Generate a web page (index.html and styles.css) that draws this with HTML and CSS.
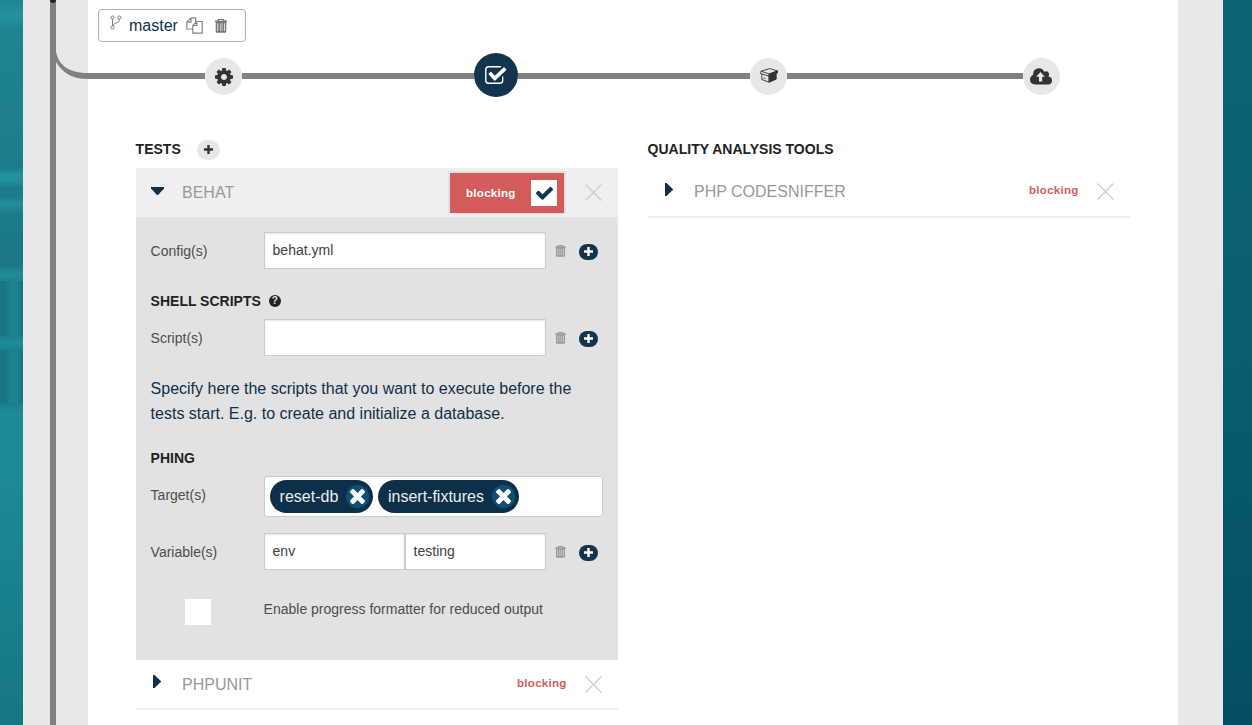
FILE: index.html
```html
<!DOCTYPE html>
<html lang="en">
<head>
<meta charset="utf-8">
<title>Build configuration</title>
<link rel="stylesheet" href="styles.css">
</head>
<body>
<svg class="defs" aria-hidden="true">
  <symbol id="trash" viewBox="0 0 12 14"><path fill="currentColor" fill-rule="evenodd" d="M3.500 0h5q.7 0 .8.8l.2.8H12v1.500h-.7v9.200q0 1.500-1.500 1.500H2.200Q.7 13.800.7 12.300V3.100H0V1.600h2.500l.2-.8Q2.800 0 3.500 0zM4.200 1.100L4 1.700h4l-.2-.6zM2.400 4.200v7.300q0 .5.400.5t.4-.5V4.200zM5 4.200V12h.6V4.200zM6.800 4.200V12h.6V4.200zM9 4.200V11.500q0 .5.400.5t.4-.5V4.200z"/></symbol>
  <symbol id="plus" viewBox="0 0 9 9"><path fill="currentColor" d="M3.300 0h2.400v3.300H9v2.400H5.700V9H3.300V5.700H0V3.300h3.300z"/></symbol>
  <symbol id="check" viewBox="122 270 1550 1252"><path fill="currentColor" d="M1671 566q0 40-28 68l-724 724-136 136q-28 28-68 28t-68-28l-136-136-362-362q-28-28-28-68t28-68l136-136q28-28 68-28t68 28l294 295 656-657q28-28 68-28t68 28l136 136q28 28 28 68z"/></symbol>
  <symbol id="times" viewBox="302 366 1188 1188"><path fill="currentColor" d="M1490 1322q0 40-28 68l-136 136q-28 28-68 28t-68-28l-294-294-294 294q-28 28-68 28t-68-28l-136-136q-28-28-28-68t28-68l294-294-294-294q-28-28-28-68t28-68l136-136q28-28 68-28t68 28l294 294 294-294q28-28 68-28t68 28l136 136q28 28 28 68t-28 68l-294 294 294 294q28 28 28 68z"/></symbol>
  <symbol id="close" viewBox="0 0 17 17"><path stroke="currentColor" stroke-width="1.100" fill="none" d="M.5.5l16 16M16.500.5l-16 16"/></symbol>
</svg>
<div class="shell">
  <div class="backdrop-left"></div>
  <div class="rail"><i class="rail-line"></i><i class="rail-dot"></i>
    <svg class="rail-curve" width="40" height="34" viewBox="0 0 40 34"><path d="M25 2v2C27.500 15 35 25 57 25h5v6h-5C41 31 32 25 25 14z" transform="translate(-22 0)" fill="#808080"/></svg>
  </div>
  <main class="sheet">
    <div class="branch">
      <svg class="fork" width="12" height="16" viewBox="0 0 12 16" fill="none" stroke="#808080"><circle cx="2.500" cy="2.500" r="1.600"/><circle cx="2.500" cy="12.500" r="1.600"/><circle cx="9.300" cy="2.500" r="1.600"/><path d="M2.500 4v7M9.300 4c.2 4-2.300 3.500-4.300 4.300q-1.500.7-2 2.700"/></svg>
      <span class="branch-name">master</span>
      <svg class="copy" width="17" height="17" viewBox="0 0 17 17" fill="none" stroke="#858585" stroke-width="1.200"><path d="M6.500 12H.8V5.200L5 .8h4.700v4M5 .8v4.400H.8M6.800 8.500l4-4h5.400v11.700H6.800zM10.800 4.500v4h-4"/></svg>
      <svg class="branch-trash" width="12" height="14"><use href="#trash"/></svg>
    </div>
    <div class="pipeline">
      <i class="link lead"></i>
      <span class="step gear-step"><svg width="18" height="18" viewBox="128 128 1536 1536"><path fill="currentColor" d="M1152 896q0-106-75-181t-181-75-181 75-75 181 75 181 181 75 181-75 75-181zm512-109v222q0 12-8 23t-20 13l-185 28q-19 54-39 91 35 50 107 138 10 12 10 25t-9 23q-27 37-99 108t-94 71q-12 0-26-9l-138-108q-44 23-91 38-16 136-29 186-7 28-36 28h-222q-14 0-24.500-8.500t-11.500-21.500l-28-184q-49-16-90-37l-141 107q-10 9-25 9-14 0-25-11-126-114-165-168-7-10-7-23 0-12 8-23 15-21 51-66.500t54-70.500q-27-50-41-99l-183-27q-13-2-21-12.500t-8-23.500v-222q0-12 8-23t19-13l186-28q14-46 39-92-40-57-107-138-10-12-10-24 0-10 9-23 26-36 98.500-107.500t94.500-71.500q13 0 26 10l138 107q44-23 91-38 16-136 29-186 7-28 36-28h222q14 0 24.500 8.500t11.500 21.500l28 184q49 16 90 37l142-107q9-9 24-9 13 0 25 10 129 119 165 170 7 8 7 22 0 12-8 23-15 21-51 66.500t-54 70.500q26 50 41 98l183 28q13 2 21 12.500t8 23.500z"/></svg></span>
      <i class="link"></i>
      <span class="step active"><svg width="22" height="18" viewBox="0 0 22 18" fill="none" stroke="#fff"><path stroke-width="1.400" d="M16 .8H3.500Q.8.800.8 3.500v11q0 2.700 2.700 2.700h11.500q2.700 0 2.700-2.700V10.500"/><path stroke-width="3.700" d="M4.600 6.800l5.200 5.600L20.300 2.400"/></svg></span>
      <i class="link"></i>
      <span class="step box-step"><svg width="18" height="15" viewBox="0 0 18 15" fill="none" stroke="#333" stroke-width=".9" stroke-linejoin="round"><path d="M1 3.200L9.700.6l7.800 2.300-8.300 3zM1 3.200L.5 5.500l8.200 2.600.5-2.200M1.800 6v5.500l7.200 2.700V8"/><path fill="#333" d="M9.200 6l8.300-3v2l-1.300.6v5.600L9.200 14.200z"/><path d="M3.500 10l2 .7"/></svg></span>
      <i class="link last"></i>
      <span class="step cloud-step"><svg width="22" height="17" viewBox="0 0 22 17"><path fill="#333" d="M5 16.500Q0 16 0 11.500 0 8.500 3 7 2.800 1 8.500.3q4-.3 5.700 3.400Q18 2.500 19 5.500q.3 1.500-.5 3 3.500.5 3.500 4 0 3.700-4 4z"/><path fill="#e7e7e7" d="M10.500 4l4.300 4.800h-2.600v4.700H9V8.800H6.200z"/></svg></span>
    </div>
    <div class="columns">
      <section class="column">
        <h2 class="column-title">TESTS <span class="add"><svg width="9" height="9"><use href="#plus"/></svg></span></h2>
        <div class="tool open">
          <svg class="arrow" width="13" height="8" viewBox="0 0 13 8"><path fill="#0f3049" d="M0 0h13v1.500L7 8H6L0 1.500z"/></svg>
          <span class="tool-name">BEHAT</span>
          <span class="blocking-box"><span class="blocking">blocking</span><span class="tick"><svg width="17" height="14"><use href="#check"/></svg></span></span>
          <svg class="close" width="17" height="17"><use href="#close"/></svg>
        </div>
        <div class="settings">
          <div class="row"><label>Config(s)</label><div class="input">behat.yml</div><svg class="trash" width="11" height="12"><use href="#trash"/></svg><span class="more"><svg width="9" height="9"><use href="#plus"/></svg></span></div>
          <h3 class="group">SHELL SCRIPTS <span class="help-icon">?</span></h3>
          <div class="row"><label>Script(s)</label><div class="input"></div><svg class="trash" width="11" height="12"><use href="#trash"/></svg><span class="more"><svg width="9" height="9"><use href="#plus"/></svg></span></div>
          <p class="hint">Specify here the scripts that you want to execute before the tests start. E.g. to create and initialize a database.</p>
          <h3 class="group">PHING</h3>
          <div class="row target-row"><label>Target(s)</label><div class="tags"><span class="tag">reset-db<i class="remove"><svg width="15" height="15"><use href="#times"/></svg></i></span><span class="tag wide">insert-fixtures<i class="remove"><svg width="15" height="15"><use href="#times"/></svg></i></span></div></div>
          <div class="row"><label>Variable(s)</label><div class="pair"><div class="input">env</div><div class="input">testing</div></div><svg class="trash" width="11" height="12"><use href="#trash"/></svg><span class="more"><svg width="9" height="9"><use href="#plus"/></svg></span></div>
          <div class="check-row"><span class="checkbox"></span><span class="check-label">Enable progress formatter for reduced output</span></div>
        </div>
        <div class="tool lower">
          <svg class="arrow right" width="8" height="13" viewBox="0 0 8 13"><path fill="#0f3049" d="M0 0h1.500L8 6.200v.6L1.500 13H0z"/></svg>
          <span class="tool-name">PHPUNIT</span><span class="blocking">blocking</span>
          <svg class="close" width="17" height="17"><use href="#close"/></svg>
        </div>
      </section>
      <section class="column">
        <h2 class="column-title">QUALITY ANALYSIS TOOLS</h2>
        <div class="tool">
          <svg class="arrow right" width="8" height="13" viewBox="0 0 8 13"><path fill="#0f3049" d="M0 0h1.500L8 6.200v.6L1.500 13H0z"/></svg>
          <span class="tool-name">PHP CODESNIFFER</span><span class="blocking">blocking</span>
          <svg class="close" width="17" height="17"><use href="#close"/></svg>
        </div>
      </section>
    </div>
  </main>
  <div class="margin-right"></div>
  <div class="backdrop-right"></div>
</div>
</body>
</html>
```

FILE: styles.css
```css
* { box-sizing: border-box; }
body { margin: 0; font-family: "Liberation Sans", Arial, sans-serif; font-size: 14px; color: #4d4d4d; overflow: hidden; }
svg { display: block; flex: none; }
.defs { position: absolute; width: 0; height: 0; }
.shell { display: grid; grid-template-columns: 23px 65px 1090px 45px 29px; height: 725px; }
.backdrop-left {
  background:
    linear-gradient(90deg, #1a7484 5px, #1c8490 11px, #1c8490 16px, #1a7484 21px) 0 281px / 23px 55px no-repeat,
    linear-gradient(90deg, #1a7484 5px, #1c8490 11px, #1c8490 16px, #1a7484 21px) 0 350px / 23px 53px no-repeat,
    linear-gradient(#1e8490 0, #22939e 15px, #1e8490 28px, #1e818d 120px, #1c7c8a 168px, #21939e 174px, #21939e 180px, #1c7c8a 188px, #1c7c8a 196px, #218f9a 204px, #1c7c8a 213px, #1b7785 265px, #1f8e98 274px, #1c808c 283px, #1c808c 335px, #1f8d98 343px, #1c808c 350px, #1b7b88 402px, #1d8b96 412px, #1c8994 480px, #187f8b 620px, #167782 725px);
}
.rail { position: relative; background: #e8e8e8; padding-left: 27px; }
.rail-line { display: block; width: 6px; height: 100%; background: #808080; }
.rail-dot { position: absolute; left: 27px; top: -3px; width: 6px; height: 6px; border-radius: 50%; background: #222; }
.rail-curve { position: absolute; left: 30px; top: 48px; }
.sheet { background: #fff; padding: 9px 48px 0; }
.margin-right { background: #e8e8e8; }
.backdrop-right { background: linear-gradient(170deg, #0c6475, #0b5e70 40%, #07576a 70%, #044e62); }

.branch { display: flex; width: 148px; height: 33px; margin-left: -38px; padding-left: 12px; border: 1px solid #b0b0b0; border-radius: 4px; }
.fork { margin: 5px 0 0 -1px; }
.branch-name { width: 49px; margin-left: 7px; font-size: 16px; line-height: 31px; color: #0f3049; }
.copy { margin: 7px 0 0 8px; }
.branch-trash { margin: 9px 0 0 12px; color: #777; }

.pipeline { display: flex; align-items: center; width: 972px; height: 44px; margin: 11px 0 0 -48px; }
.link { flex: 0 0 232px; height: 6px; margin-top: 2px; background: #808080; }
.lead { flex-basis: 117px; }
.last { flex-basis: 236px; }
.step { display: grid; place-items: center; width: 37px; height: 37px; margin-top: 2px; border-radius: 50%; background: #e7e7e7; color: #333; }
.step.active { width: 44px; height: 44px; margin-top: 0; background: #12354d; }
.gear-step { padding-top: 1px; }
.box-step { padding-bottom: 2px; }
.cloud-step { padding-right: 1px; }

.columns { display: grid; grid-template-columns: 482px 482px; gap: 30px; margin-top: 41px; }
.column-title { display: flex; align-items: center; gap: 16px; height: 22px; margin: 0 0 8px -.4px; font-size: 14px; color: #222; }
.add { display: grid; place-items: center; width: 23px; height: 20px; margin-top: 2px; padding-bottom: 1px; border-radius: 10px; background: #e7e7e7; color: #333; }
.tool { display: flex; align-items: center; height: 50px; padding: 0 16px 1px 15px; border-bottom: 2px solid #eee; }
.arrow { width: 31px; height: 8px; padding-right: 18px; margin-top: -4px; }
.arrow.right { height: 13px; margin: -5px 0 0 2px; width: 29px; padding-right: 21px; }
.tool-name { flex: 1; font-size: 16px; color: #999; }
.blocking { width: 50px; font-size: 11.5px; font-weight: bold; letter-spacing: .3px; color: #d35c5a; margin-top: -4px; }
.close { margin-left: 18px; color: #ccc; }
.tool.open { height: 49px; padding-bottom: 0; border: 0; background: #efefef; }
.open .close { margin-left: 20px; }
.lower .tool-name { padding-top: 2px; }
.lower .blocking { margin-top: -2px; }
.lower .close { margin-top: 1px; }
.blocking-box { display: flex; align-items: center; width: 118px; height: 43px; margin-right: -1px; padding: 0 5px 0 16px; border: 2px solid #e1e1e1; border-bottom-width: 1px; background: #d35c5a; }
.blocking-box .blocking { color: #fff; margin: 0 15px 0 0; }
.tick { display: grid; place-items: center; width: 26px; height: 26px; background: #fff; color: #12354d; }

.settings { height: 443px; padding: 15px 15px 15px 14.6px; background: #e2e2e2; }
.row { display: flex; height: 37px; }
.row label { width: 113.4px; line-height: 39px; }
.input { width: 282px; height: 37px; padding: 0 7.6px; border: 1px solid #ccc; background: #fff; box-shadow: inset 0 1px 2px rgba(0,0,0,.1); line-height: 34px; color: #404040; }
.pair { display: flex; }
.pair .input { width: 141px; }
.trash { margin: 13px 0 0 9px; color: #999; }
.more { display: grid; place-items: center; width: 19px; height: 16px; margin: 12px 0 0 13px; padding-bottom: 1px; border-radius: 8px; background: #12354d; color: #fff; }
.group { display: flex; align-items: center; gap: 8px; height: 20px; margin: 22px 0 8px; font-size: 14px; color: #222; }
.help-icon { display: grid; place-items: center; width: 12px; height: 12px; border-radius: 50%; background: #222; color: #e2e2e2; font-size: 10px; line-height: 12px; }
.hint { margin: 20px 0 0; font-size: 16px; line-height: 25px; color: #0f3049; }
.target-row { height: 41px; margin-bottom: 16px; }
.tags { display: flex; gap: 5px; width: 339px; height: 41px; padding: 3px 5px; border: 1px solid #ccc; border-radius: 3px; background: #fff; }
.tag { display: flex; align-items: center; gap: 7.500px; height: 33px; padding: 0 4px 0 9.600px; border-radius: 17px; background: #0c3049; color: #eee; font-size: 16px; }
.tag.wide { padding-left: 10.200px; }
.remove { display: grid; place-items: center; width: 23px; height: 23px; border-radius: 50%; background: #0e5074; color: #fff; }
.check-row { display: flex; margin-top: 29px; }
.checkbox { width: 26px; height: 26px; margin: 0 52.600px 0 34.400px; background: #fff; }
.check-label { line-height: 20px; }
```
